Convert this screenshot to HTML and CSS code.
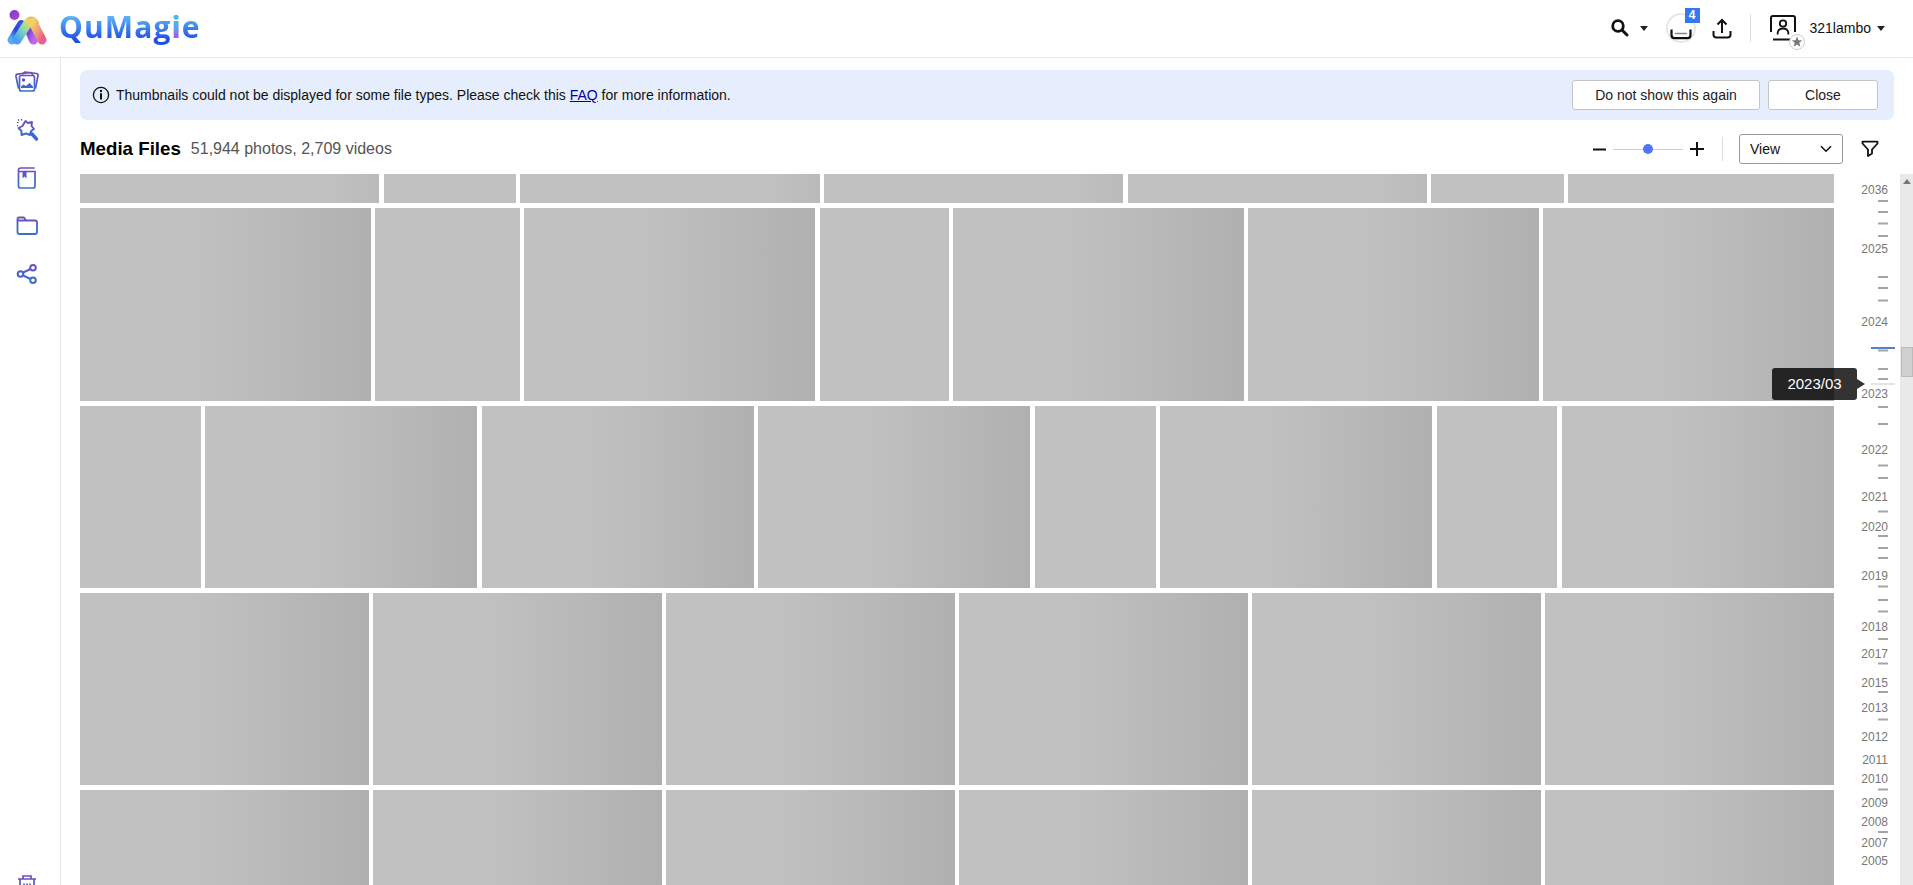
FILE: index.html
```html
<!DOCTYPE html>
<html lang="en">
<head>
<meta charset="UTF-8" />
<meta name="viewport" content="width=device-width, initial-scale=1" />
<title>QuMagie</title>
<link rel="stylesheet" href="styles.css">
</head>
<body>
  <header class="header">
    <div class="brand">
      <svg class="brand-mark" width="40" height="36" viewBox="0 0 40 36">
        <defs>
          <linearGradient id="legLeft" x1="0" y1="1" x2="1" y2="0">
            <stop offset="0" stop-color="#5aa9f5" /><stop offset="0.5" stop-color="#2448d8" /><stop offset="1" stop-color="#4054d8" />
          </linearGradient>
          <linearGradient id="legMid" x1="0" y1="1" x2="1" y2="0">
            <stop offset="0" stop-color="#4a9df0" /><stop offset="0.45" stop-color="#7fdcb4" /><stop offset="0.8" stop-color="#ecd860" /><stop offset="1" stop-color="#f0b070" />
          </linearGradient>
          <linearGradient id="legRight" x1="0" y1="0" x2="1" y2="1">
            <stop offset="0" stop-color="#f2d45c" /><stop offset="0.5" stop-color="#f09a80" /><stop offset="1" stop-color="#ea5e8c" />
          </linearGradient>
          <linearGradient id="legInner" x1="0" y1="0" x2="1" y2="1">
            <stop offset="0" stop-color="#6a35d0" /><stop offset="1" stop-color="#b96af0" />
          </linearGradient>
          <linearGradient id="dot" x1="0" y1="0" x2="1" y2="1">
            <stop offset="0" stop-color="#6a3ce0" /><stop offset="1" stop-color="#c04ab0" />
          </linearGradient>
        </defs>
        <circle cx="7.500" cy="6" r="5" fill="url(#dot)" />
        <path d="M5 31 L14.500 15.500" stroke="url(#legLeft)" stroke-width="9" stroke-linecap="round" />
        <path d="M21 18 L26.500 31" stroke="url(#legInner)" stroke-width="9" stroke-linecap="round" />
        <path d="M10 31 L20.500 14.500 Q24 9.500 27.500 14.500" stroke="url(#legMid)" stroke-width="9" stroke-linecap="round" fill="none" />
        <path d="M26 13.500 L35 31" stroke="url(#legRight)" stroke-width="9" stroke-linecap="round" />
      </svg>
      <span class="brand-name">QuMag<span class="brand-i">i</span>e</span>
    </div>
    <div class="header-tools">
      <svg class="icon-search" width="18" height="18" viewBox="0 0 18 18">
        <circle cx="7" cy="7" r="5.300" fill="none" stroke="#111" stroke-width="2.800" />
        <path d="M11 11 L16 16" stroke="#111" stroke-width="3" stroke-linecap="round" />
      </svg>
      <span class="caret caret-search"></span>
      <div class="tasks">
        <svg width="32" height="32" viewBox="0 0 32 32">
          <circle cx="16" cy="16" r="14" fill="#fff" stroke="#e6e6e6" stroke-width="2" />
          <path d="M6.500 17.500 V23 Q6.500 26.200 9.500 26.200 H22.500 Q25.500 26.200 25.500 23 V17.500" fill="none" stroke="#111" stroke-width="2.200" />
          <path d="M10 21.500 H22" stroke="#888" stroke-width="1.500" />
        </svg>
        <span class="badge">4</span>
      </div>
      <svg class="icon-upload" width="20" height="21" viewBox="0 0 20 21">
        <path d="M1.500 13 V16.500 Q1.500 19.500 4.500 19.500 H15.500 Q18.500 19.500 18.500 16.500 V13 M10 15 V2 M5.500 6.500 L10 2 L14.500 6.500" fill="none" stroke="#111" stroke-width="2" />
      </svg>
      <span class="divider header-divider"></span>
      <div class="avatar">
        <svg width="28" height="28" viewBox="0 0 28 28">
          <path d="M2 18 V4 Q2 2 4 2 H24 Q26 2 26 4 V18 M4 25.500 H22" fill="none" stroke="#111" stroke-width="2" />
          <circle cx="14" cy="9.500" r="3.200" fill="none" stroke="#111" stroke-width="1.800" />
          <path d="M8.700 20.500 V18.500 Q9.500 14.500 14 14.500 Q18.500 14.500 19.300 18.500 V20.500" fill="none" stroke="#111" stroke-width="1.800" />
        </svg>
        <svg class="star" width="18" height="18" viewBox="0 0 18 18">
          <circle cx="9" cy="9" r="7.500" fill="#fff" stroke="#ccc" />
          <path d="M9 3.500 L10.500 7.200 L14.300 7.400 L11.300 9.800 L12.400 13.700 L9 11.500 L5.600 13.700 L6.700 9.800 L3.700 7.400 L7.500 7.200 Z" fill="#777" />
        </svg>
      </div>
      <span class="user">321lambo</span>
      <span class="caret caret-user"></span>
    </div>
  </header>

  <div class="layout">
    <nav class="sidebar">
      <svg width="26" height="26" viewBox="0 0 26 26">
        <defs>
          <linearGradient id="nav" gradientUnits="userSpaceOnUse" x1="0" y1="2" x2="0" y2="22">
            <stop offset="0" stop-color="#7d49b8" /><stop offset="0.5" stop-color="#4a60c4" /><stop offset="1" stop-color="#3672d0" />
          </linearGradient>
        </defs>
        <g fill="none" stroke="url(#nav)" stroke-width="1.700" stroke-linejoin="round">
          <rect x="5.500" y="6.500" width="15" height="15.500" rx="2" />
          <path d="M4.500 19.500 L2 7.500 Q1.700 5.500 3.500 5.200 L17 3.500 L19 6" />
          <path d="M8.500 5 L11 3 L22.500 4.500 Q24.300 4.800 24 6.500 L21.500 19.500" />
        </g>
        <circle cx="9.500" cy="11" r="1.700" fill="#5a56c0" />
        <path d="M7 19 V17.500 L9.500 15.500 L12 17 L15.500 14 L19 17.500 V19 Z" fill="#4364c8" />
      </svg>
      <svg width="26" height="26" viewBox="0 0 26 26">
        <path d="M11.500 4 L14 6 L18 5 L17.500 9 L20 12 L17 14 L16 18 L12 16.500 L7.500 18 L7.500 14 L4.500 11 L8.500 9 Z" fill="none" stroke="url(#nav)" stroke-width="1.900" stroke-linejoin="round" />
        <path d="M17.500 16.500 L22.500 22" stroke="#3969ca" stroke-width="3.400" stroke-linecap="round" />
        <path d="M3 5.500 H4.500 M4 2.500 L5 3.500 M7.500 2 V3.500 M3 9 L4 8.500" stroke="#4b4a86" stroke-width="1.200" />
      </svg>
      <svg width="26" height="26" viewBox="0 0 26 26">
        <path d="M20 3 H7 Q4.500 3 4.500 5 V21 Q4.500 23 6.500 23 H19 Q21 23 21 21 V6.500 H6" fill="none" stroke="url(#nav)" stroke-width="1.700" stroke-linecap="round" />
        <path d="M8.500 6.500 H12.500 V13.500 L10.500 11.500 L8.500 13.500 Z" fill="#5a5bc0" />
      </svg>
      <svg width="26" height="26" viewBox="0 0 26 26">
        <path d="M12 7.500 L10 4.500 H5 Q3.500 4.500 3.500 6 V19 Q3.500 21 5.500 21 H21 Q23 21 23 19 V9.500 Q23 7.500 21 7.500 H3.500" fill="none" stroke="url(#nav)" stroke-width="1.800" stroke-linejoin="round" />
      </svg>
      <svg width="26" height="26" viewBox="0 0 26 26">
        <g fill="none" stroke="url(#nav)" stroke-width="2">
          <circle cx="6.500" cy="13" r="2.800" />
          <circle cx="19" cy="6.700" r="2.800" />
          <circle cx="19" cy="19.200" r="2.800" />
          <path d="M9 11.700 L16.500 8 M9 14.300 L16.500 18" />
        </g>
      </svg>
      <svg class="icon-trash" width="26" height="26" viewBox="0 0 26 26">
        <path d="M4 6 H22 M9 6 V3 H17 V6 M6 6 V21 Q6 23 8 23 H18 Q20 23 20 21 V6 M10 10.500 V19 M13 10.500 V19 M16 10.500 V19" fill="none" stroke="url(#nav)" stroke-width="1.700" />
      </svg>
    </nav>

    <main class="content">
      <div class="notice">
        <svg width="18" height="18" viewBox="0 0 18 18">
          <circle cx="9" cy="9" r="7.600" fill="none" stroke="#111" stroke-width="1.300" />
          <path d="M9 7.300 V13.500" fill="none" stroke="#111" stroke-width="2" />
          <circle cx="9" cy="5" r="1.200" fill="#111" />
        </svg>
        <span class="notice-text">Thumbnails could not be displayed for some file types. Please check this <a href="#">FAQ</a> for more information.</span>
        <button class="btn btn-hide">Do not show this again</button>
        <button class="btn btn-close">Close</button>
      </div>

      <div class="toolbar">
        <h1>Media Files</h1>
        <span class="count">51,944 photos, 2,709 videos</span>
        <div class="zoom">
          <svg width="13" height="13" viewBox="0 0 13 13"><path d="M0 6.500 H13" stroke="#111" stroke-width="2" /></svg>
          <div class="slider"><span class="knob"></span></div>
          <svg width="14" height="14" viewBox="0 0 14 14"><path d="M0 7 H14 M7 0 V14" stroke="#111" stroke-width="2" /></svg>
        </div>
        <span class="divider"></span>
        <button class="view">View
          <svg width="12" height="8" viewBox="0 0 12 8"><path d="M1 1.200 L6 6.200 L11 1.200" fill="none" stroke="#111" stroke-width="1.600" /></svg>
        </button>
        <svg class="icon-filter" width="18" height="18" viewBox="0 0 18 18">
          <path d="M1.500 1.700 H16.500 V3.500 L11 9.500 V13.500 L7 16 V9.500 L1.500 3.500 Z" fill="none" stroke="#111" stroke-width="1.800" stroke-linejoin="round" />
        </svg>
      </div>

      <div class="browser">
        <div class="gallery">
          <div class="row row-first">
            <div class="tile w299"></div><div class="tile w132"></div><div class="tile w299"></div><div class="tile w299"></div><div class="tile w299"></div><div class="tile w132"></div><div class="tile w266"></div>
          </div>
          <div class="row row-193">
            <div class="tile w291"></div><div class="tile w145 flat"></div><div class="tile w291"></div><div class="tile w129 flat"></div><div class="tile w291"></div><div class="tile w291"></div><div class="tile w291"></div>
          </div>
          <div class="row row-182">
            <div class="tile w121 flat"></div><div class="tile w272"></div><div class="tile w272"></div><div class="tile w272"></div><div class="tile w121 flat"></div><div class="tile w272"></div><div class="tile w121 flat"></div><div class="tile w272"></div>
          </div>
          <div class="row row-192">
            <div class="tile"></div><div class="tile"></div><div class="tile"></div><div class="tile"></div><div class="tile"></div><div class="tile"></div>
          </div>
          <div class="row row-192">
            <div class="tile"></div><div class="tile"></div><div class="tile"></div><div class="tile"></div><div class="tile"></div><div class="tile"></div>
          </div>
        </div>

        <div class="timeline">
          <svg width="66" height="711" viewBox="1834 174 66 711">
            <g class="years">
              <text x="1888" y="194">2036</text>
              <text x="1888" y="253">2025</text>
              <text x="1888" y="326">2024</text>
              <text x="1888" y="398">2023</text>
              <text x="1888" y="454">2022</text>
              <text x="1888" y="501">2021</text>
              <text x="1888" y="531">2020</text>
              <text x="1888" y="580">2019</text>
              <text x="1888" y="631">2018</text>
              <text x="1888" y="658">2017</text>
              <text x="1888" y="687">2015</text>
              <text x="1888" y="712">2013</text>
              <text x="1888" y="741">2012</text>
              <text x="1888" y="764">2011</text>
              <text x="1888" y="783">2010</text>
              <text x="1888" y="807">2009</text>
              <text x="1888" y="826">2008</text>
              <text x="1888" y="847">2007</text>
              <text x="1888" y="865">2005</text>
            </g>
            <path class="ticks" d="M1878 201h10M1878 212h10M1878 223.500h10M1878 236h10M1878 277h10M1878 288h10M1878 300.500h10M1878 350.500h10M1878 369h10M1878 379h10M1878 407h10M1878 424h10M1878 465.500h10M1878 478h10M1878 511.500h10M1878 536h10M1878 548h10M1878 558h10M1878 586.500h10M1878 600h10M1878 611.500h10M1878 639h10M1878 663.500h10M1878 692h10M1878 719.500h10M1878 789.500h10M1878 832h10" />
            <path class="current" d="M1871 348h24" />
            <path class="hover" d="M1871 384h24" />
          </svg>
          <div class="tooltip">2023/03</div>
        </div>

        <div class="scrollbar">
          <span class="scroll-up"></span>
          <span class="thumb"></span>
        </div>
      </div>
    </main>
  </div>
</body>
</html>
```

FILE: styles.css
```css
* {
  box-sizing: border-box;
}

body {
  margin: 0;
  height: 100vh;
  overflow: hidden;
  display: flex;
  flex-direction: column;
  font-family: "Liberation Sans", Arial, sans-serif;
  font-size: 14px;
  color: #111;
  background: #fff;
}

svg {
  display: block;
  flex-shrink: 0;
}

/* Header */
.header {
  display: flex;
  flex-shrink: 0;
  align-items: flex-start;
  justify-content: space-between;
  height: 58px;
  border-bottom: 1px solid #e8e8e8;
}

.brand {
  display: flex;
  padding: 9px 0 0 7px;
}

.brand-name {
  margin: -3px 0 0 12px;
  font-family: "Open Sans", "Noto Sans", sans-serif;
  font-size: 30px;
  font-weight: 700;
  line-height: 42px;
  letter-spacing: 1.1px;
  color: transparent;
  background: linear-gradient(#60b8f4 22%, #3f86f0 50%, #2450e0 80%);
  -webkit-background-clip: text;
  background-clip: text;
}

.brand-i {
  background: linear-gradient(#45b8dc 40%, #6a9cf0 55%, #a45ce8 75%);
  -webkit-background-clip: text;
  background-clip: text;
}

.header-tools {
  display: flex;
  align-items: center;
  height: 56px;
  padding-right: 28px;
}

.caret {
  border: 4px solid transparent;
  border-top: 5px solid #222;
  border-bottom: 0;
}

.caret-search {
  margin: 1px 17px 0 11px;
}

.caret-user {
  margin-left: 6px;
}

.tasks {
  position: relative;
}

.badge {
  position: absolute;
  top: -4px;
  left: 20px;
  width: 15px;
  height: 15px;
  font-size: 12px;
  font-weight: bold;
  line-height: 15px;
  text-align: center;
  color: #fff;
  background: #3478ee;
}

.icon-upload {
  margin-left: 15px;
}

.divider {
  width: 1px;
  height: 24px;
  background: #ddd;
}

.header-divider {
  height: 28px;
  margin: 0 18px;
}

.avatar {
  position: relative;
}

.star {
  position: absolute;
  left: 19px;
  top: 19px;
}

.user {
  margin-left: 13px;
}

/* Sidebar */
.layout {
  display: flex;
  flex: 1;
  min-height: 0;
}

.sidebar {
  display: flex;
  flex-direction: column;
  align-items: center;
  gap: 22px;
  width: 61px;
  padding: 11px 7px 0 0;
  border-right: 1px solid #e8e8e8;
}

.icon-trash {
  margin-top: auto;
  margin-bottom: -14px;
}

/* Content */
.content {
  display: flex;
  flex: 1;
  flex-direction: column;
  min-width: 0;
  padding: 12px 0 0 19px;
}

.notice {
  display: flex;
  flex-shrink: 0;
  align-items: center;
  height: 50px;
  margin-right: 19px;
  padding: 0 16px 0 12px;
  border-radius: 7px;
  background: #e6eefd;
}

.notice-text {
  flex: 1;
  margin-left: 6px;
}

.notice-text a {
  color: #0000aa;
}

.btn {
  height: 30px;
  margin-left: 8px;
  padding: 0;
  border: 1px solid #c4c4c4;
  border-radius: 3px;
  font: inherit;
  color: #222;
  background: #fff;
}

.btn-hide {
  width: 188px;
}

.btn-close {
  width: 110px;
}

.toolbar {
  display: flex;
  flex-shrink: 0;
  align-items: center;
  height: 54px;
  padding: 4px 34px 0 0;
}

h1 {
  margin: 0;
  font-size: 18.72px;
  color: #000;
}

.count {
  margin-left: 10px;
  font-size: 16px;
  color: #555;
}

.zoom {
  display: flex;
  align-items: center;
  gap: 7px;
  margin: 0 18px 0 auto;
}

.slider {
  display: flex;
  align-items: center;
  justify-content: center;
  width: 70px;
  height: 1px;
  background: #ccc;
}

.knob {
  width: 10px;
  height: 10px;
  border-radius: 50%;
  background: #4f76f6;
}

.view {
  display: flex;
  align-items: center;
  justify-content: space-between;
  width: 104px;
  height: 30px;
  margin: 0 18px 0 16px;
  padding: 0 10px;
  border: 1px solid #999;
  border-radius: 3px;
  font: inherit;
  color: #111;
  background: #fff;
}

/* Photo rows */
.browser {
  display: flex;
  flex: 1;
  min-height: 0;
}

.gallery {
  display: flex;
  flex: 1;
  flex-direction: column;
  gap: 5px;
  overflow: hidden;
}

.row {
  display: flex;
  flex-shrink: 0;
  gap: 4.3px;
}

.row-first { height: 29px; }
.row-193 { height: 193px; }
.row-182 { height: 182px; }
.row-192 { height: 192px; }

.tile {
  flex: 1 1 0;
  background: linear-gradient(90deg, #c1c1c1 38%, #b8b8b8 72%, #b0b0b0);
}

.row-first .tile {
  background: linear-gradient(90deg, #c1c1c1 82%, #bababa);
}

.row .flat {
  background: #c1c1c1;
}

.w121 { flex-grow: 121; }
.w129 { flex-grow: 129; }
.w132 { flex-grow: 132.5; }
.w145 { flex-grow: 145; }
.w266 { flex-grow: 266; }
.w272 { flex-grow: 272.3; }
.w291 { flex-grow: 291; }
.w299 { flex-grow: 299.5; }

.row-first .w132,
.row-first .w266 {
  background: #c1c1c1;
}

/* Timeline */
.timeline {
  position: relative;
  width: 66px;
}

.years text {
  font-size: 12px;
  fill: #777;
  text-anchor: end;
}

.ticks {
  stroke: #a5a5a5;
  stroke-width: 2;
}

.current {
  stroke: #5580cc;
  stroke-width: 2;
}

.hover {
  stroke: #ddd;
  stroke-width: 1.5;
}

.tooltip {
  position: absolute;
  top: 194px;
  right: 43px;
  width: 85px;
  height: 32px;
  border-radius: 3px;
  font-size: 15px;
  line-height: 32px;
  text-align: center;
  color: #fff;
  background: rgba(0, 0, 0, 0.8);
}

.tooltip::after {
  content: "";
  position: absolute;
  top: 11px;
  left: 100%;
  border: 5px solid transparent;
  border-left: 8px solid rgba(0, 0, 0, 0.8);
  border-right: 0;
}

.scrollbar {
  display: flex;
  flex-direction: column;
  align-items: center;
  width: 13px;
  background: #e9e9e9;
}

.scroll-up {
  margin-top: 5px;
  border: 4px solid transparent;
  border-bottom: 5px solid #777;
  border-top: 0;
}

.thumb {
  width: 12px;
  height: 30px;
  margin: 163px 0 0 1px;
  border: 1px solid #bbb;
  background: #d0d0d0;
}
```
